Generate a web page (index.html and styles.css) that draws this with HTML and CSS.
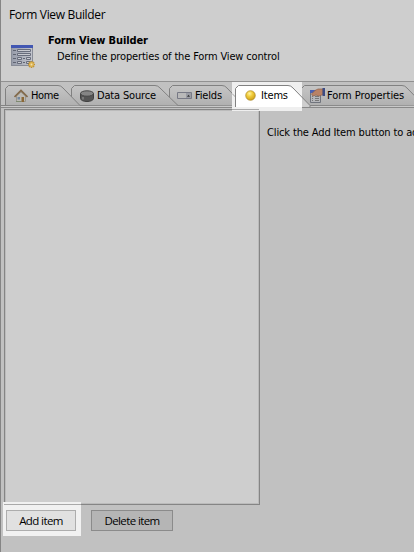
FILE: index.html
```html
<!DOCTYPE html>
<html lang="en">
<head>
<meta charset="utf-8">
<title>Form View Builder</title>
<link rel="stylesheet" href="styles.css">
</head>
<body>
<div class="window">
  <header class="header">
    <div class="caption"><span>Form View Builder</span></div>
    <div class="intro">
      <svg class="form-icon" width="26" height="26" viewBox="0 0 26 26">
        <defs>
          <linearGradient id="sheet"><stop offset="0" stop-color="#969ba9"/><stop offset="1" stop-color="#c3c6ce"/></linearGradient>
          <linearGradient id="face" x2="0" y2="1"><stop offset="0" stop-color="#c5c5c5"/><stop offset="1" stop-color="#b0b0b0"/></linearGradient>
        </defs>
        <rect x=".5" y=".5" width="21" height="20" fill="url(#sheet)" stroke="#888c97"/>
        <path d="M0 1.500h22" stroke="#4257b2" stroke-width="3"/>
        <path d="M2 5.500h3M2 9.500h3M2 13.500h3M2 17.500h3M12 13.500h2M12 17.500h2" stroke="#5f6472"/>
        <path d="M6.500 4.500h13v2h-13zM6.500 8.500h13v2h-13zM6.500 12.500h4v2h-4zM15.500 12.500h4v2h-4zM6.500 16.500h4v2h-4zM15.500 16.500h4v2h-4z" fill="#c8cad0" stroke="#686d7c"/>
        <path d="M20.500 16v7M17 19.500h7M18 17l5 5M23 17l-5 5" stroke="#bd9136" stroke-width="1.600"/>
        <circle cx="20.500" cy="19.500" r="2.400" fill="#e0b550"/><circle cx="20.500" cy="19.500" r=".9" fill="#eee0b8"/>
      </svg>
      <div class="intro-text">
        <h1>Form View Builder</h1>
        <p>Define the properties of the Form View control</p>
      </div>
    </div>
  </header>

  <nav class="tabs">
    <div class="tab home">
      <svg class="shape" width="76" height="22" viewBox="0 0 76 22"><path d="M.5 20V3.500L3.500.5H53Q56 .5 58 3L75 20.500"/></svg>
      <svg class="icon" width="14" height="14" viewBox="0 0 14 14"><path d="M2.500 7L7 3l4.500 4v5.500h-9z" fill="#bcbab5" stroke="#99958c"/><path d="M.5 8L7 1.500 13.500 8" fill="none" stroke="#82694a" stroke-width="1.700"/><path d="M7.500 8h2.500v5H7.500z" fill="#8b6836"/><path d="M3.500 8h2.500v2.500H3.500z" fill="#7388a0"/><path d="M2 12.500h5" stroke="#7d8a70"/></svg>
      <span>Home</span>
    </div>
    <div class="tab data">
      <svg class="shape" width="108" height="22" viewBox="0 0 108 22"><path d="M.5 20V3.500L3.500.5H84Q87 .5 89 3L107 20.500"/></svg>
      <svg class="icon" width="14" height="12" viewBox="0 0 14 12"><path d="M.5 3.500v5C1 12.500 13 12.500 13.500 8.500v-5z" fill="#555" stroke="#404040"/><ellipse cx="7" cy="3.500" rx="6.500" ry="2.700" fill="#858585" stroke="#484848"/><path d="M3 7v2.500" stroke="#858585" stroke-width="1.500"/></svg>
      <span>Data Source</span>
    </div>
    <div class="tab fields">
      <svg class="shape" width="76" height="22" viewBox="0 0 76 22"><path d="M.5 20V3.500L3.500.5H53Q56 .5 58 3L75 20.500"/></svg>
      <svg class="icon" width="15" height="7" viewBox="0 0 15 7"><path d="M.5.5h14v6H.5z" fill="#b9b9b9" stroke="#777985"/><path d="M9 1h5v5H9z" fill="#999ba3"/><path d="M10 4.800l1.500-2 1.500 2z" fill="#333"/></svg>
      <span>Fields</span>
    </div>
    <div class="tab items">
      <svg class="shape" width="76" height="22" viewBox="0 0 76 22">
        <defs><linearGradient id="lit" gradientUnits="userSpaceOnUse" x1="0" x2="76"><stop offset=".882" stop-color="#fff"/><stop offset=".882" stop-color="#cecece"/></linearGradient></defs>
        <path class="neighbour" d="M-3 8.500L.5 12"/>
        <path class="active" d="M.5 22V3.500L3.500.5H53Q56 .5 58 3L75 20.500V22"/>
      </svg>
      <svg class="icon" width="11" height="11" viewBox="0 0 11 11"><defs><radialGradient id="gold" cx=".4" cy=".3" r=".75"><stop offset="0" stop-color="#fff3a0"/><stop offset=".4" stop-color="#f2ce3e"/><stop offset="1" stop-color="#c99a13"/></radialGradient></defs><circle cx="5.500" cy="5.500" r="4.800" fill="url(#gold)" stroke="#ae8a29" stroke-width=".7"/></svg>
      <span>Items</span>
    </div>
    <div class="tab properties">
      <svg class="shape" width="130" height="22" viewBox="0 0 130 22"><path d="M.5 20V3.500L3.500.5H101Q104 .5 106 3L123 20.500"/></svg>
      <svg class="icon" width="17" height="16" viewBox="0 0 17 16"><path d="M1.500 2.500h10v12h-10z" fill="#b5b6ba" stroke="#70747d"/><path d="M1 3.500h5" stroke="#4a62b5" stroke-width="3"/><path d="M3 8.500h1M3 10.500h1M3 12.500h1M6 8.500h4M6 10.500h4M6 12.500h4" stroke="#777"/><path d="M2.500 6L6 2.500 9 1h5v5.500L10 8 7 7 4 8z" fill="#b98266" stroke="#91614a" stroke-width=".7"/><path d="M13.500 0H16v8h-2.500z" fill="#3c4b83"/></svg>
      <span>Form Properties</span>
    </div>
  </nav>

  <main class="body">
    <section class="left">
      <div class="list"></div>
      <div class="actions">
        <div class="spot"><button>Add item</button></div>
        <button class="delete">Delete item</button>
      </div>
    </section>
    <p class="hint"><span>Click the Add Item button to add</span></p>
  </main>
</div>
</body>
</html>
```
FILE: styles.css
```css
* { box-sizing: border-box; }
body { margin: 0; overflow: hidden; }
h1, p { margin: 0; font-size: 11px; }
.window {
  width: 414px; height: 552px; overflow: hidden;
  border-left: 1px solid #858585;
  background: #c1c1c1; color: #000;
  font: 11px/14px "DejaVu Sans Condensed", "DejaVu Sans", sans-serif;
  white-space: nowrap;
}
.header { height: 82px; background: #cecece; border-bottom: 1px solid #919191; }
.caption { height: 34px; padding: 7px 0 0 8px; font: 12px/16px "Open Sans", sans-serif; letter-spacing: -.34px; }
.intro { display: flex; padding-left: 10px; }
.form-icon { margin-top: 11px; flex: none; }
.intro-text { padding-left: 11px; }
h1 { font: bold 11px/14px "DejaVu Sans Condensed", sans-serif; letter-spacing: -.13px; }
.intro-text p { margin-top: 2px; padding-left: 9px; letter-spacing: -.15px; }

.tabs { display: flex; position: relative; height: 26px; padding: 3px 0 0 4px; border-bottom: 1px solid #898989; background: linear-gradient(#c1c1c1 0 23px, #838383 23px 24px, #c8c8c8 24px); }
.tab { position: relative; display: flex; align-items: center; flex: none; height: 21px; gap: 3px; letter-spacing: -.17px; }
.tab > span, .icon { position: relative; }
.shape { position: absolute; left: 0; top: 0; overflow: visible; fill: url(#face); stroke: #818181; }
.icon { flex: none; }
.home { width: 66px; padding-left: 9px; z-index: 5; letter-spacing: -.35px; }
.data { width: 98px; padding-left: 9px; z-index: 4; }
.fields { width: 66px; padding-left: 8px; z-index: 3; }
.items { width: 66px; padding-left: 10px; gap: 5px; z-index: 3; }
.active { fill: url(#lit); }
.neighbour { fill: none; stroke: #a5a5a5; }
.items::before { content: ""; position: absolute; left: -3px; top: -3px; width: 70px; height: 29px; background: linear-gradient(#a9a9a9, #a9a9a9) 0 27px / 27px 1px no-repeat, #efefef; }
.properties { width: 130px; padding-left: 8px; gap: 1px; z-index: 1; letter-spacing: -.05px; }

.body { display: flex; padding: 1px 0 0 3px; }
.left { width: 256px; flex: none; }
.list { height: 396px; border: 1px solid #858585; box-shadow: inset 1px 1px #bbb, inset -1px -1px #bbb; background: #cecece; }
.actions { display: flex; margin: -3px 0 0 -1px; }
.spot { position: relative; width: 78px; height: 34px; padding: 8px 3px; background: linear-gradient(#a9a9a9, #a9a9a9) 1px 2px / 77px 1px no-repeat, #f1f1f1; }
button { width: 70px; height: 21px; padding: 0; border: 1px solid #adadad; background: #e1e1e1; color: #000; font: 11.5px/18px "Open Sans", sans-serif; letter-spacing: -.6px; display: block; }
.delete { width: 82px; margin: 8px 0 0 10px; background: #b5b5b5; border-color: #8b8b8b; }
.hint { padding: 17px 0 0 7px; letter-spacing: -.13px; }
```
